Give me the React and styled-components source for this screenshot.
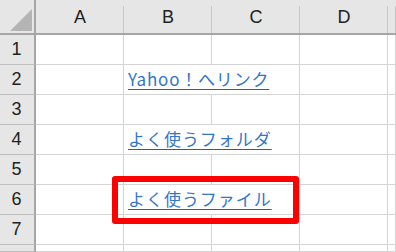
import React from 'react';
import styled, { createGlobalStyle } from 'styled-components';

const Global = createGlobalStyle`
  html, body { margin: 0; padding: 0; background: #fff; }
  body {
    width: 396px; height: 252px; overflow: hidden;
    font-family: "Liberation Sans", "Noto Sans CJK JP", sans-serif;
  }
`;

const Sheet = styled.div`
  position: relative;
  display: grid;
  grid-template-columns: 36px repeat(4, 88px) 1fr;
  grid-template-rows: 35px repeat(7, 30px) 1fr;
  width: 396px;
  height: 252px;
  background: #fff;
  overflow: hidden;
`;

const Corner = styled.div`
  box-sizing: border-box;
  background: #e6e6e6;
  border-right: 2px solid #a6a6a6;
  border-bottom: 2px solid #a6a6a6;
  display: flex;
  align-items: flex-end;
  justify-content: flex-end;
  padding: 0 2px 2px 0;
`;

const ColHeader = styled.div`
  position: relative;
  box-sizing: border-box;
  background: #e6e6e6;
  border-bottom: 2px solid #a6a6a6;
  display: flex;
  align-items: center;
  justify-content: center;
  font-size: 18px;
  color: #222;
  padding-top: 2px;
  &::after {
    content: "";
    position: absolute;
    right: 0;
    top: 6px;
    bottom: 0;
    width: 1px;
    background: #c6c6c6;
  }
`;

const RowHeader = styled.div`
  box-sizing: border-box;
  background: #e6e6e6;
  border-right: 2px solid #a6a6a6;
  border-bottom: 1px solid #bdbdbd;
  display: flex;
  align-items: center;
  justify-content: center;
  font-size: 18px;
  color: #222;
  padding-right: 1px;
`;

const Cell = styled.div`
  box-sizing: border-box;
  border-right: 1px solid #d4d4d4;
  border-bottom: 1px solid #d4d4d4;
  grid-column: span ${(p) => p.$span || 1};
  min-width: 0;
  display: flex;
  align-items: flex-end;
  overflow: visible;
  white-space: nowrap;
`;

const Link = styled.a`
  font-family: "Noto Sans CJK JP", "Liberation Sans", sans-serif;
  font-size: 17px;
  line-height: 22px;
  letter-spacing: ${(p) => p.$ls}px;
  color: #3275cc;
  text-decoration: underline;
  text-decoration-color: #1d5fb0;
  text-underline-offset: 3px;
  padding: 0 0 4px 4px;
  position: relative;
  z-index: 1;
`;

const Highlight = styled.div`
  position: absolute;
  left: 112px;
  top: 176px;
  width: 187px;
  height: 48px;
  box-sizing: border-box;
  border: 6px solid #ff0000;
  border-radius: 3px;
  z-index: 2;
  pointer-events: none;
`;

const cols = ['A', 'B', 'C', 'D', ''];
const links = {
  2: { text: 'Yahoo！へリンク', ls: 0.8 },
  4: { text: 'よく使うフォルダ', ls: 1 },
  6: { text: 'よく使うファイル', ls: 1 },
};

export default function App() {
  const rows = [1, 2, 3, 4, 5, 6, 7, 8];
  return (
    <>
      <Global />
      <Sheet>
        <Corner>
          <svg width="22" height="22" viewBox="0 0 22 22">
            <polygon points="0,22 22,0 22,22" fill="#b4b4b4" />
          </svg>
        </Corner>
        {cols.map((c, i) => (
          <ColHeader key={i}>{c}</ColHeader>
        ))}
        {rows.map((r) => {
          const link = links[r];
          return (
            <React.Fragment key={r}>
              <RowHeader>{r < 8 ? r : ''}</RowHeader>
              <Cell />
              {link ? (
                <Cell $span={2}>
                  <Link href="#" $ls={link.ls}>{link.text}</Link>
                </Cell>
              ) : (
                <>
                  <Cell />
                  <Cell />
                </>
              )}
              <Cell />
              <Cell />
            </React.Fragment>
          );
        })}
        <Highlight />
      </Sheet>
    </>
  );
}
